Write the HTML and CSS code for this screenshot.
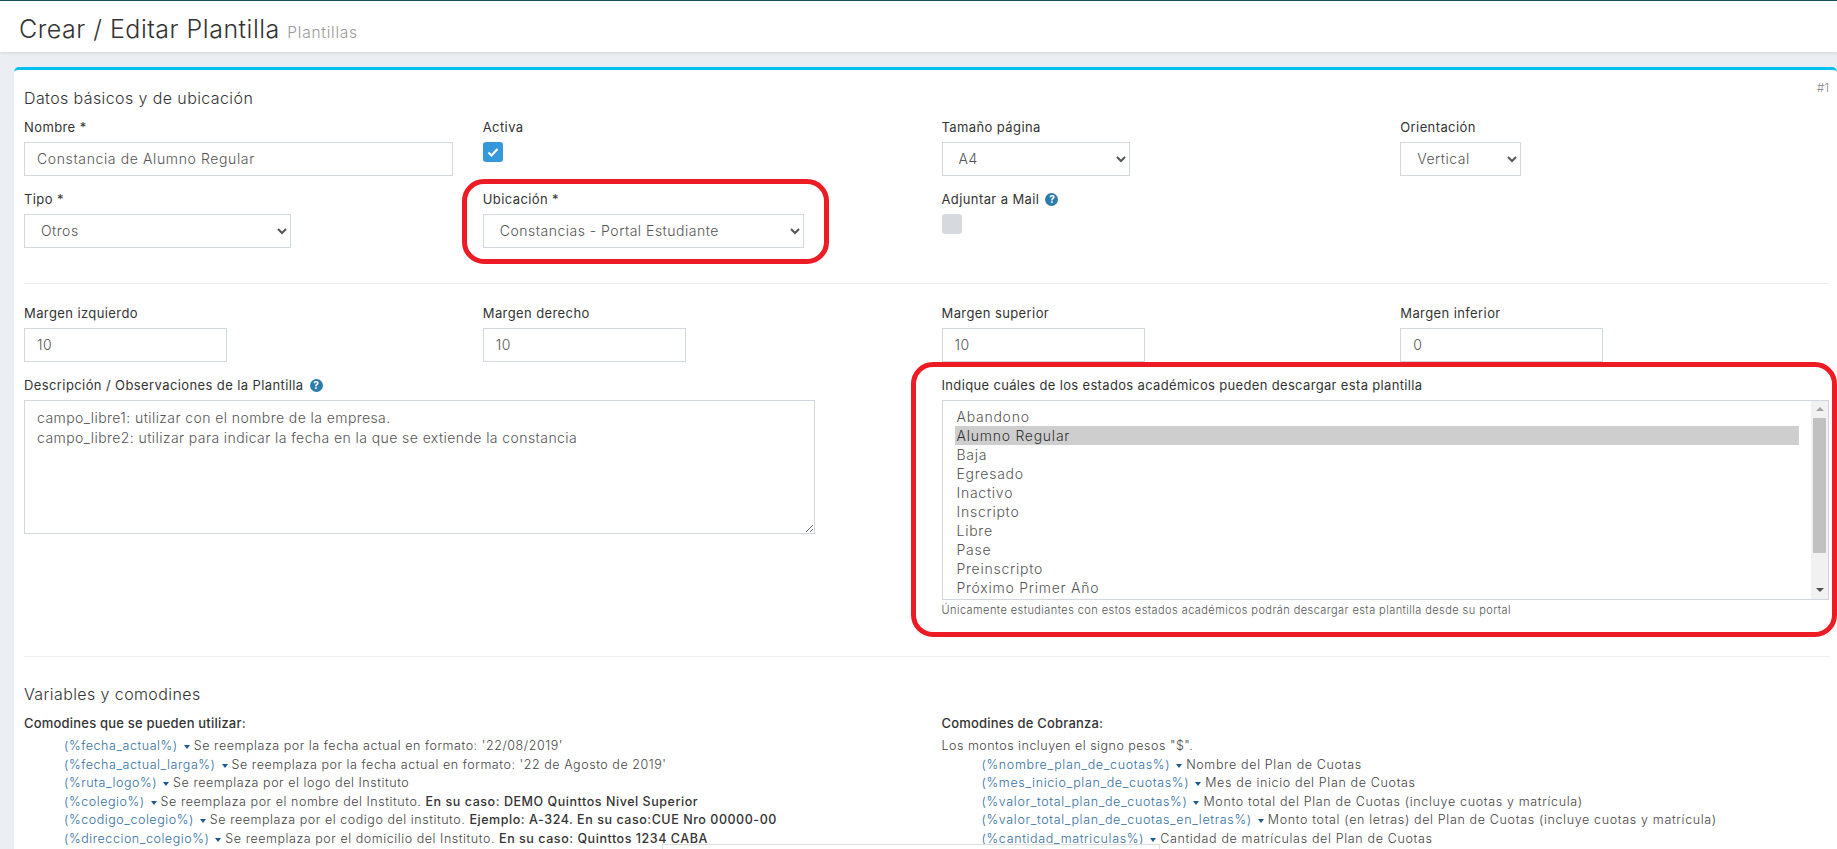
FILE: index.html
```html
<!DOCTYPE html>
<html lang="es">
<head>
<meta charset="utf-8">
<title>Crear / Editar Plantilla</title>
<link rel="stylesheet" href="styles.css">
</head>
<body>
<header class="page-head">
  <h1>Crear / Editar Plantilla <small>Plantillas</small></h1>
</header>
<main class="card">
  <span class="card-id">#1</span>
  <h2 class="section-title">Datos básicos y de ubicación</h2>
  <div class="grid">
    <div class="field"><label>Nombre *</label><input class="control control-wide" type="text" value="Constancia de Alumno Regular"></div>
    <div class="field"><label>Activa</label><span class="check check-on"><svg viewBox="0 0 20 20" width="20" height="20"><path d="M5.5 10.5l3 3 6-6.5" fill="none" stroke="#fff" stroke-width="2.2"/></svg></span></div>
    <div class="field"><label>Tamaño página</label><select class="control w-size"><option>A4</option></select></div>
    <div class="field"><label>Orientación</label><select class="control w-orient"><option>Vertical</option></select></div>
    <div class="field"><label>Tipo *</label><select class="control w-tipo"><option>Otros</option></select></div>
    <div class="field"><label>Ubicación *</label><select class="control w-ubic"><option>Constancias - Portal Estudiante</option></select></div>
    <div class="field"><label>Adjuntar a Mail <span class="help">?</span></label><span class="check check-off"></span></div>
  </div>
  <hr class="rule rule-one">
  <div class="grid">
    <div class="field"><label>Margen izquierdo</label><input class="control w-margin" type="text" value="10"></div>
    <div class="field"><label>Margen derecho</label><input class="control w-margin" type="text" value="10"></div>
    <div class="field"><label>Margen superior</label><input class="control w-margin" type="text" value="10"></div>
    <div class="field"><label>Margen inferior</label><input class="control w-margin" type="text" value="0"></div>
    <div class="field span-2"><label>Descripción / Observaciones de la Plantilla <span class="help">?</span></label>
      <textarea class="control notes">campo_libre1: utilizar con el nombre de la empresa.
campo_libre2: utilizar para indicar la fecha en la que se extiende la constancia</textarea></div>
    <div class="field span-2"><label class="label-wide">Indique cuáles de los estados académicos pueden descargar esta plantilla</label>
      <div class="listbox" role="listbox">
        <ul class="options">
          <li>Abandono</li><li class="selected">Alumno Regular</li><li>Baja</li><li>Egresado</li><li>Inactivo</li><li>Inscripto</li><li>Libre</li><li>Pase</li><li>Preinscripto</li><li>Próximo Primer Año</li>
        </ul>
        <div class="scrollbar"><i class="arrow arrow-up"></i><b class="thumb"></b><i class="arrow arrow-down"></i></div>
      </div>
      <p class="hint">Únicamente estudiantes con estos estados académicos podrán descargar esta plantilla desde su portal</p>
    </div>
  </div>
  <hr class="rule rule-two">
  <h2 class="section-title">Variables y comodines</h2>
  <div class="vars">
    <section>
      <h3>Comodines que se pueden utilizar:</h3>
      <ul class="var-list">
        <li><code>(%fecha_actual%)</code><i class="caret"></i>Se reemplaza por la fecha actual en formato: '22/08/2019'</li>
        <li><code>(%fecha_actual_larga%)</code><i class="caret"></i>Se reemplaza por la fecha actual en formato: '22 de Agosto de 2019'</li>
        <li><code>(%ruta_logo%)</code><i class="caret"></i>Se reemplaza por el logo del Instituto</li>
        <li><code>(%colegio%)</code><i class="caret"></i>Se reemplaza por el nombre del Instituto. <b>En su caso: DEMO Quinttos Nivel Superior</b></li>
        <li><code>(%codigo_colegio%)</code><i class="caret"></i>Se reemplaza por el codigo del instituto. <b>Ejemplo: A-324. En su caso:CUE Nro 00000-00</b></li>
        <li><code>(%direccion_colegio%)</code><i class="caret"></i>Se reemplaza por el domicilio del Instituto. <b>En su caso: Quinttos 1234 CABA</b></li>
      </ul>
    </section>
    <section>
      <h3>Comodines de Cobranza:</h3>
      <p class="var-note">Los montos incluyen el signo pesos "$".</p>
      <ul class="var-list var-list-right">
        <li><code>(%nombre_plan_de_cuotas%)</code><i class="caret"></i>Nombre del Plan de Cuotas</li>
        <li><code>(%mes_inicio_plan_de_cuotas%)</code><i class="caret"></i>Mes de inicio del Plan de Cuotas</li>
        <li><code>(%valor_total_plan_de_cuotas%)</code><i class="caret"></i>Monto total del Plan de Cuotas (incluye cuotas y matrícula)</li>
        <li><code>(%valor_total_plan_de_cuotas_en_letras%)</code><i class="caret"></i>Monto total (en letras) del Plan de Cuotas (incluye cuotas y matrícula)</li>
        <li><code>(%cantidad_matriculas%)</code><i class="caret"></i>Cantidad de matrículas del Plan de Cuotas</li>
      </ul>
    </section>
  </div>
</main>
<div class="annot annot-ubic"></div>
<div class="annot annot-estados"></div>
<div class="floating-box"></div>
</body>
</html>
```
FILE: styles.css
```css
* { box-sizing: border-box; }
html, body { margin: 0; height: 849px; overflow: hidden; }
body {
  position: relative;
  background: #ebeef3;
  font-family: Inter, "Liberation Sans", sans-serif;
  font-weight: 300;
  color: #444;
}
.page-head {
  height: 52px;
  background: #fff;
  border-top: 1px solid #1d4c5c;
  box-shadow: 0 1px 3px rgba(0,0,0,.12);
  padding: 11px 0 0 19px;
}
.page-head h1 {
  margin: 0;
  font-size: 25px;
  line-height: 34px;
  font-weight: 300;
  letter-spacing: .5px;
  color: #333;
}
.page-head small { font-size: 15.5px; letter-spacing: .75px; color: #999; }
.card {
  position: relative;
  margin: 15px 0 0 14px;
  height: 800px;
  background: #fff;
  border-top: 3px solid #00c0ef;
  border-radius: 5px 5px 0 0;
  padding: 16px 8px 0 10px;
}
.card-id { position: absolute; right: 8px; top: 10px; font-size: 12px; color: #888; }
.section-title {
  margin: 0 0 8px;
  font-size: 16px;
  line-height: 24px;
  font-weight: 300;
  letter-spacing: .4px;
  color: #333;
}
.grid {
  display: grid;
  grid-template-columns: repeat(4, 1fr);
  column-gap: 30px;
}
.field { min-height: 53px; margin-bottom: 14px; }
.span-2 { grid-column: span 2; }
.field label {
  display: block;
  height: 19px;
  line-height: 19px;
  margin-bottom: 5px;
  font-size: 13px;
  font-weight: 400;
  letter-spacing: .4px;
  color: #333;
}
.field .label-wide { letter-spacing: .34px; }
.control {
  display: block;
  width: 100%;
  height: 34px;
  border: 1px solid #d2d6de;
  border-radius: 0;
  background: #fff;
  padding: 5px 12px 7px;
  font-family: inherit;
  font-weight: 300;
  font-size: 14px;
  letter-spacing: .5px;
  color: #555;
  outline: none;
}
.control-wide { letter-spacing: .62px; }
.w-size { width: 188px; }
.w-orient { width: 121px; }
.w-tipo { width: 267px; }
.w-ubic { width: 321px; }
.w-margin { width: 203px; }
.notes { width: 791px; height: 134px; line-height: 19.5px; padding-top: 7px; letter-spacing: .42px; }
.check { display: block; width: 20px; height: 20px; border-radius: 3px; }
.check-on { background: #3498db; }
.check-off { background: #d6dade; margin-top: 1px; }
.help {
  display: inline-block;
  width: 13px;
  height: 13px;
  margin-left: 2px;
  border-radius: 50%;
  background: #2c7cab;
  color: #fff;
  font-size: 10px;
  line-height: 13px;
  font-weight: 700;
  letter-spacing: 0;
  text-align: center;
  vertical-align: 1px;
}
.rule { border: 0; border-top: 1px solid #eee; margin: 0; }
.rule-one { margin: 21px 0 20px; }
.rule-two { margin: 24px 0 25px; }
.listbox {
  display: flex;
  height: 200px;
  border: 1px solid #d2d6de;
  background: #fff;
}
.options {
  flex: 1;
  list-style: none;
  margin: 0;
  padding: 6px 12px;
  font-size: 14px;
  line-height: 19px;
  letter-spacing: .75px;
  color: #555;
}
.options li { padding: 0 2px; }
.options .selected { background: #cecece; color: #333; }
.scrollbar {
  width: 17px;
  background: #f1f1f1;
  display: flex;
  flex-direction: column;
  align-items: center;
  padding: 0 2px;
}
.arrow { display: block; width: 0; height: 0; border-left: 4px solid transparent; border-right: 4px solid transparent; }
.arrow-up { border-bottom: 4px solid #a3a3a3; margin: 6px 0 7px; }
.arrow-down { border-top: 4px solid #505050; margin-top: 35px; }
.thumb { display: block; width: 13px; height: 135px; background: #c1c1c1; }
.hint { margin: 2px 0 0; font-size: 11px; line-height: 16px; letter-spacing: .43px; color: #555; }
.vars {
  display: grid;
  grid-template-columns: 1fr 1fr;
  column-gap: 30px;
  margin-top: 1px;
}
.vars h3 { margin: 0 0 4px; font-size: 13px; line-height: 19px; font-weight: 500; letter-spacing: .2px; color: #333; }
.var-note { margin: 0; font-size: 12.5px; line-height: 18.6px; letter-spacing: .5px; color: #444; }
.var-list { list-style: none; margin: 0; padding: 0 0 0 40px; font-size: 12.5px; line-height: 18.6px; letter-spacing: .55px; color: #444; white-space: nowrap; }
.var-list-right { letter-spacing: .65px; }
.var-list code { font-family: inherit; color: #33709f; }
.var-list b { font-weight: 500; color: #333; }
.caret {
  display: inline-block;
  width: 0;
  height: 0;
  border-left: 3.5px solid transparent;
  border-right: 3.5px solid transparent;
  border-top: 4px solid #1f5a8c;
  margin: 0 4px 0 6px;
  vertical-align: 1px;
}
.annot {
  position: absolute;
  border: 5px solid #ed1c24;
  border-radius: 22px;
}
.annot-ubic { left: 462px; top: 179px; width: 367px; height: 85px; }
.annot-estados { left: 911px; top: 362px; width: 926px; height: 275px; }
.floating-box {
  position: absolute;
  left: 662px;
  top: 844px;
  width: 498px;
  height: 5px;
  background: #fff;
  border: 1px solid #ddd;
  border-bottom: 0;
}
```
